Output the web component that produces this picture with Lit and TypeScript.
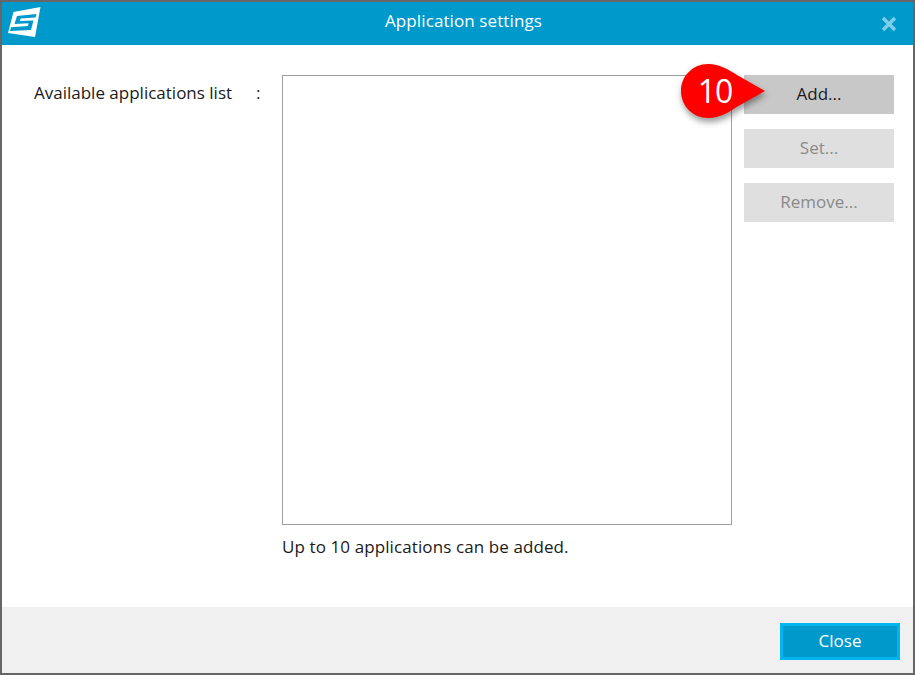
import { LitElement, html, css } from "lit";
import { customElement } from "lit/decorators.js";

@customElement("app-root")
export class AppRoot extends LitElement {
  static styles = css`
    :host {
      display: block;
      width: 915px;
      height: 675px;
      font-family: "Open Sans", "Noto Sans", sans-serif;
      font-size: 17px;
      color: #1a1a1a;
    }
    .window {
      box-sizing: border-box;
      width: 915px;
      height: 675px;
      border: 2px solid #666666;
      display: flex;
      flex-direction: column;
      background: #ffffff;
      position: relative;
    }
    .titlebar {
      height: 43px;
      flex: none;
      background: #0099cc;
      display: grid;
      grid-template-columns: 40px 1fr 40px;
      align-items: center;
      color: #ffffff;
    }
    .logo {
      display: block;
    }
    .title {
      text-align: center;
      letter-spacing: 0.1px;
      padding: 0 0 7px 12px;
    }
    .closex {
      display: block;
      justify-self: end;
      margin-right: 16px;
    }
    .content {
      flex: 1;
      display: grid;
      grid-template-columns: 236px 450px 150px;
      column-gap: 12px;
      padding: 30px 0 0 32px;
      grid-template-rows: 450px auto;
      align-content: start;
    }
    .label {
      display: flex;
      line-height: 22px;
      padding-top: 7px;
    }
    .label span:first-child {
      width: 222px;
    }
    .listbox {
      box-sizing: border-box;
      border: 1px solid #a0a0a0;
      background: #fff;
    }
    .buttons {
      display: flex;
      flex-direction: column;
      gap: 15px;
    }
    .btn {
      height: 39px;
      display: flex;
      align-items: center;
      justify-content: center;
      padding-bottom: 2px;
      box-sizing: border-box;
      background: #dfdfdf;
      color: #8a8a8a;
    }
    .btn.active {
      background: #c8c8c8;
      color: #1a1a1a;
    }
    .note {
      grid-column: 2;
      letter-spacing: 0.1px;
      line-height: 22px;
      padding-top: 11px;
    }
    .footer {
      height: 66px;
      flex: none;
      background: #f0f0f0;
      display: flex;
      justify-content: flex-end;
      align-items: flex-start;
      padding: 16px 13px 0 0;
      box-sizing: border-box;
    }
    .close {
      box-sizing: border-box;
      width: 120px;
      height: 37px;
      border: 3px solid #00b4f0;
      background: #0099cc;
      color: #fff;
      padding-bottom: 2px;
      display: flex;
      align-items: center;
      justify-content: center;
    }
    .badge {
      position: absolute;
      left: 672px;
      top: 58px;
      width: 100px;
      height: 70px;
    }
    .badge svg {
      display: block;
      filter: drop-shadow(1px 4px 3px rgba(0, 0, 0, 0.4));
    }
    .badge-num {
      position: absolute;
      left: 6px;
      top: 12px;
      width: 70px;
      text-align: center;
      color: #fff;
      font-size: 32px;
      font-weight: 400;
      letter-spacing: -1px;
      line-height: 38px;
      font-family: "Open Sans", sans-serif;
    }
  `;

  render() {
    return html`
      <div class="window">
        <div class="titlebar">
          <svg class="logo" width="40" height="43" viewBox="2 2 40 43">
            <path d="M13.5 12 L40.5 7 L35 37 L8 33 Z" fill="#ffffff" />
            <path d="M36.5 14 L17 16 L14.5 24 L28.5 23.3 L28 26 L11 27.2 L10 31 L31 30 L33.5 20.5 L20 21 L20.5 18.5 L35.5 17.5 Z" fill="#0099cc" />
          </svg>
          <div class="title">Application settings</div>
          <svg class="closex" width="16" height="16" viewBox="0 0 16 16">
            <path d="M2 2 L14 14 M14 2 L2 14" stroke="#80cde6" stroke-width="3.4" fill="none" />
          </svg>
        </div>
        <div class="content">
          <div class="label"><span>Available applications list</span><span>:</span></div>
          <div class="listbox"></div>
          <div class="buttons">
            <div class="btn active">Add...</div>
            <div class="btn">Set...</div>
            <div class="btn">Remove...</div>
          </div>
          <div class="note">Up to 10 applications can be added.</div>
        </div>
        <div class="footer"><div class="close">Close</div></div>
        <div class="badge">
          <svg width="100" height="70" viewBox="0 0 100 70">
            <path d="M34 4 C 46 4, 55 10, 63 15 L 91 31 L 63 46.7 C 55 52, 46 58, 34 58 C 19 58, 7 46, 7 31 C 7 16, 19 4, 34 4 Z" fill="#ff0000" />
          </svg>
          <div class="badge-num">10</div>
        </div>
      </div>
    `;
  }
}
